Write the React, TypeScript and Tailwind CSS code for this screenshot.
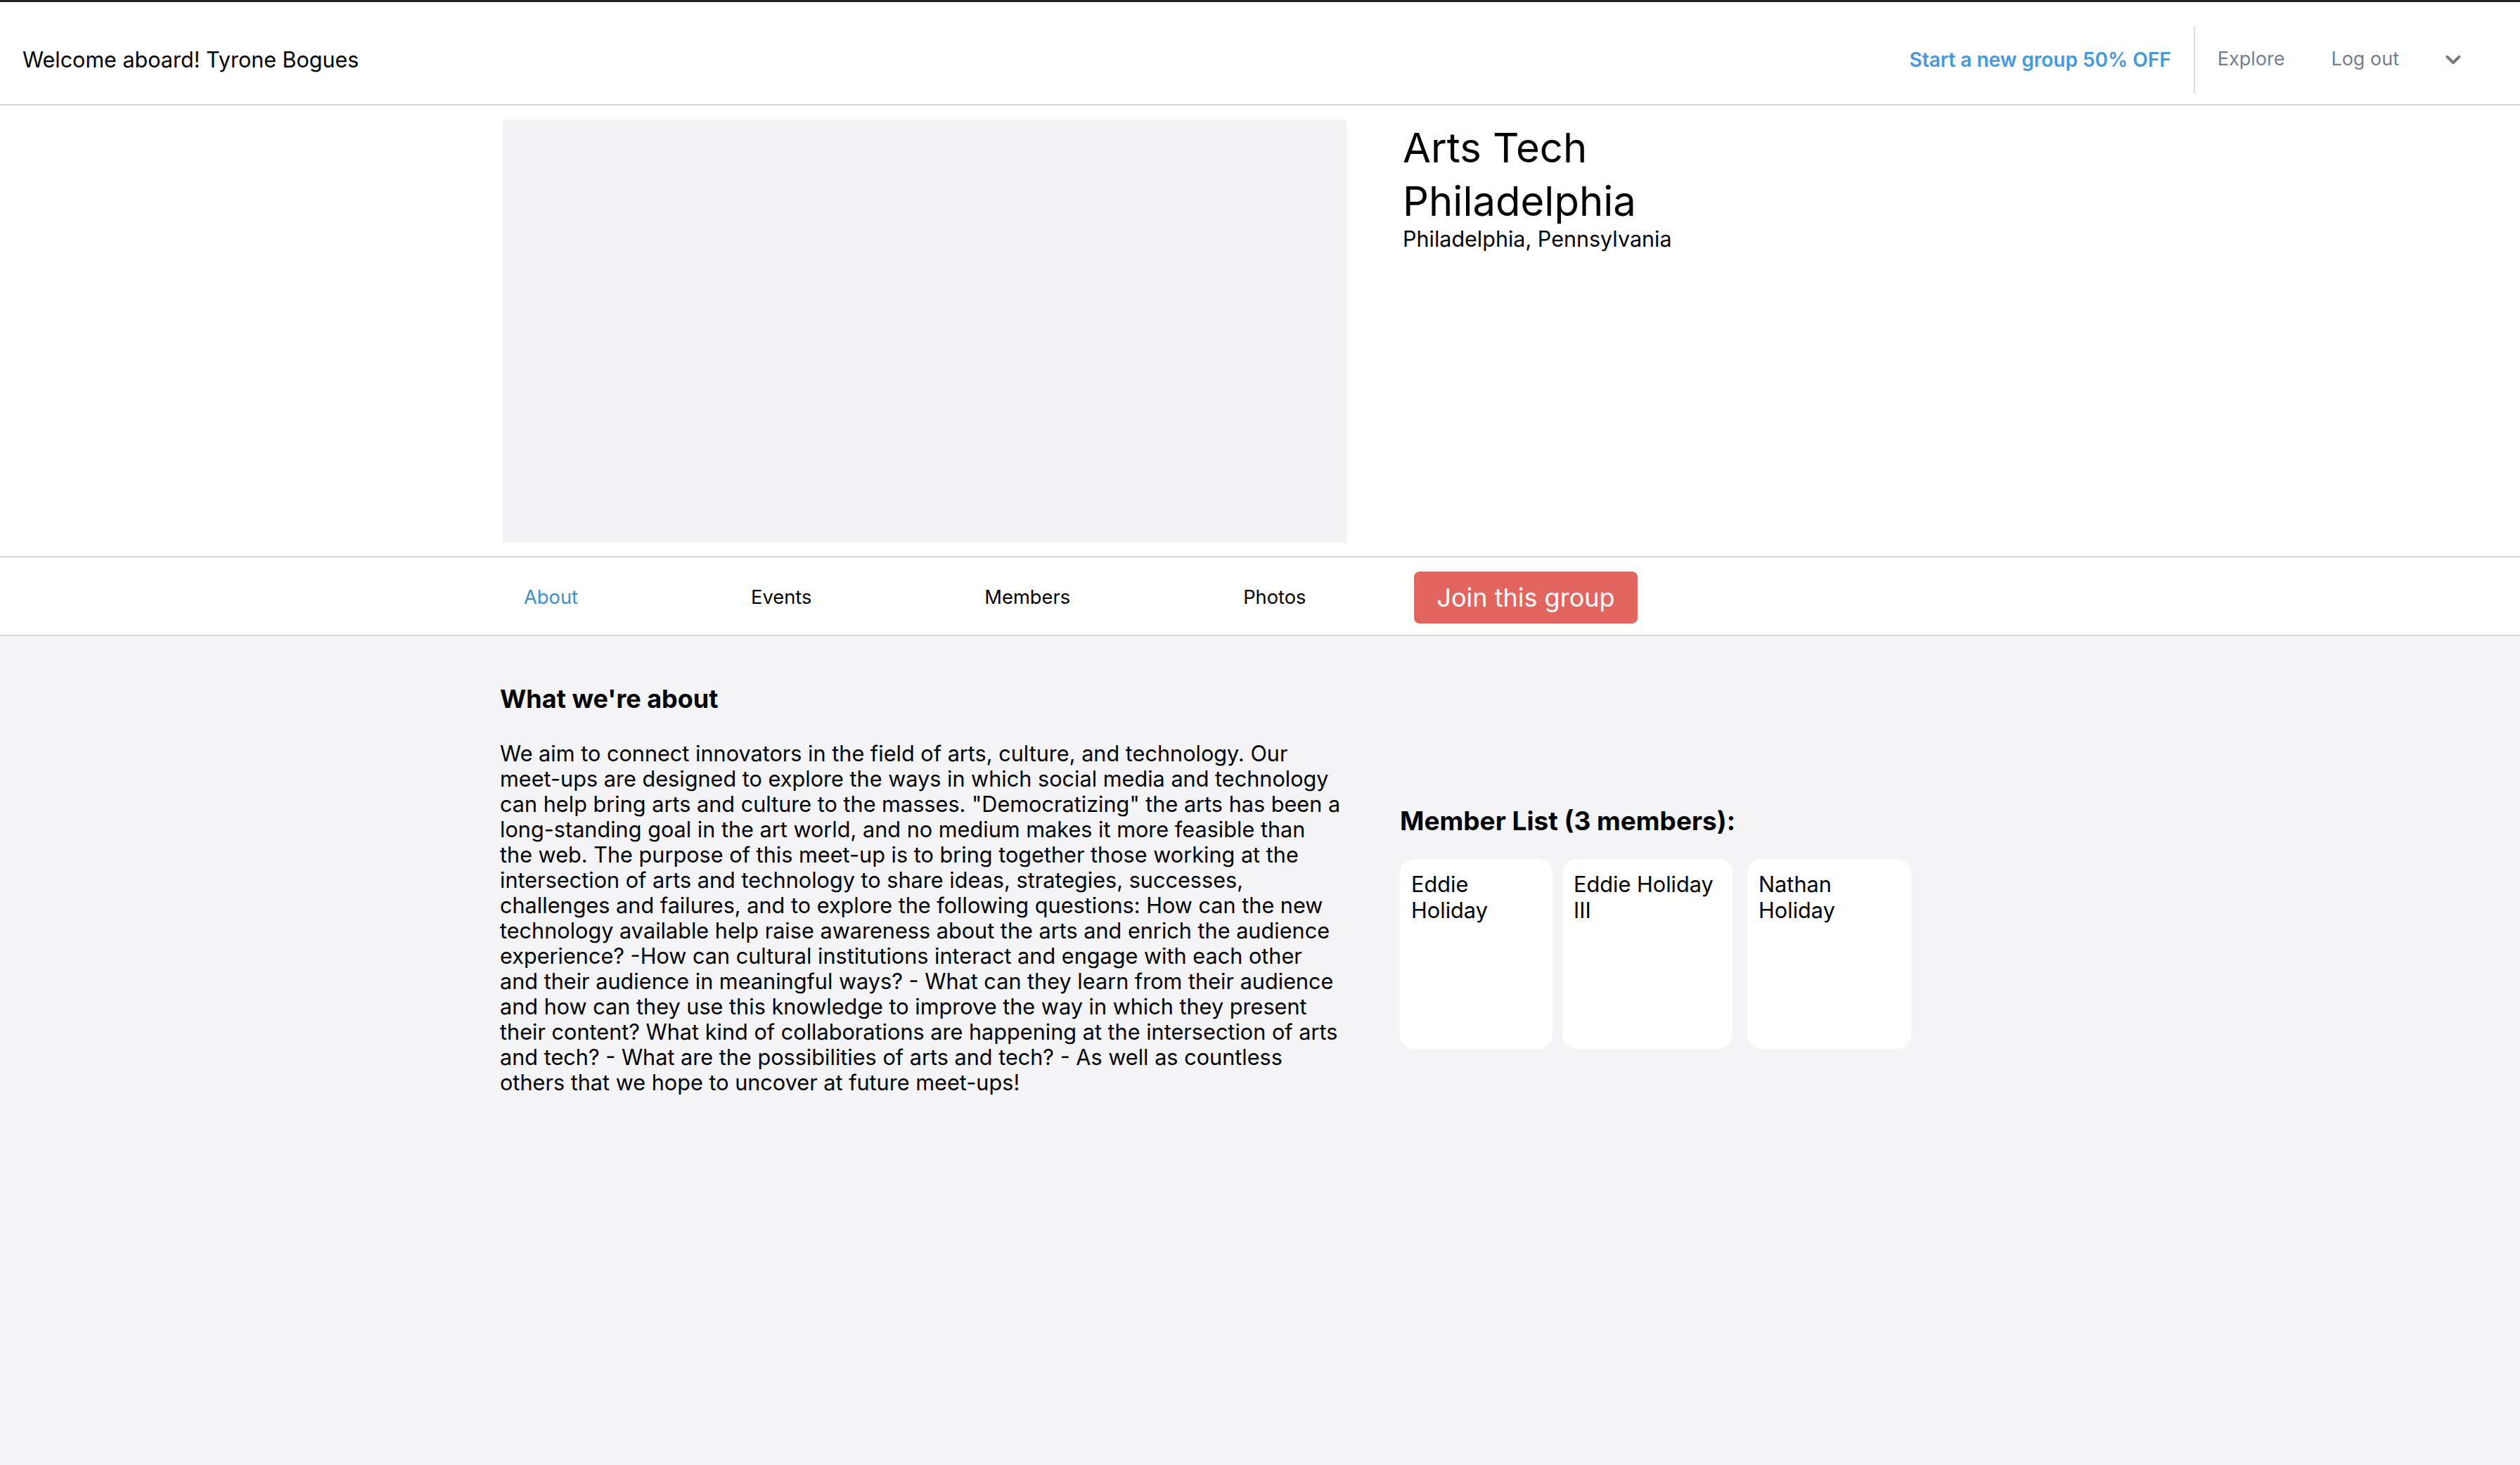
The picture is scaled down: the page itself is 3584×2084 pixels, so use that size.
import { ChevronDown } from 'lucide-react'

const tabs = ['About', 'Events', 'Members', 'Photos']

const members = [
  { id: 1, name: 'Eddie Holiday', className: 'w-[217px]' },
  { id: 2, name: 'Eddie Holiday III', className: 'ml-[14px] w-[242px]' },
  { id: 3, name: 'Nathan Holiday', className: 'ml-[21px] w-[233px]' },
]

const about =
  'We aim to connect innovators in the field of arts, culture, and technology. Our meet-ups are designed to explore the ways in which social media and technology can help bring arts and culture to the masses. "Democratizing" the arts has been a long-standing goal in the art world, and no medium makes it more feasible than the web. The purpose of this meet-up is to bring together those working at the intersection of arts and technology to share ideas, strategies, successes, challenges and failures, and to explore the following questions: How can the new technology available help raise awareness about the arts and enrich the audience experience? -How can cultural institutions interact and engage with each other and their audience in meaningful ways? - What can they learn from their audience and how can they use this knowledge to improve the way in which they present their content? What kind of collaborations are happening at the intersection of arts and tech? - What are the possibilities of arts and tech? - As well as countless others that we hope to uncover at future meet-ups!'

export default function App() {
  return (
    <div className="min-h-[2084px] bg-[#f4f4f6] font-['Inter',sans-serif] text-black">
      {/* top nav */}
      <header className="flex h-[150px] items-center justify-between border-t-[3px] border-b-2 border-t-[#222] border-b-[#d6d6d6] bg-white pt-[18px] pl-[32px] pr-[78px]">
        <div className="text-[30.5px]">Welcome aboard! Tyrone Bogues</div>
        <nav className="flex items-center">
          <a className="text-[28px] font-semibold text-[#4299e1]">Start a new group 50% OFF</a>
          <div className="mx-[32px] h-[96px] w-[2px] bg-[#dcdcdc]"></div>
          <a className="text-[27px] text-[#718096]">Explore</a>
          <a className="ml-[66px] text-[27px] text-[#718096]">Log out</a>
          <ChevronDown className="ml-[60px] h-[34px] w-[34px] text-[#777]" strokeWidth={2.75} />
        </nav>
      </header>

      {/* group hero */}
      <section className="flex bg-white pt-[20px] pb-[19px] pl-[715px]">
        <div className="h-[602px] w-[1200px] bg-[#f3f3f5]"></div>
        <div className="ml-[80px] w-[500px] pt-[2px]">
          <h1 className="text-[58px] leading-[76px]">Arts Tech Philadelphia</h1>
          <p className="text-[30.5px] leading-[32px]">Philadelphia, Pennsylvania</p>
        </div>
      </section>

      {/* tabs */}
      <div className="flex h-[114px] items-center border-y-2 border-[#d6d6d6] bg-white pt-[4px] pl-[715px]">
        <div className="flex w-[1200px] gap-[246px] pl-[30px] text-[27.3px]">
          {tabs.map((tab, i) => (
            <a key={tab} className={i === 0 ? 'text-[#3c8ecb]' : 'text-black'}>
              {tab}
            </a>
          ))}
        </div>
        <button className="ml-[96px] h-[74px] w-[318px] rounded-[8px] bg-[#e3655f] text-[36px] text-white">
          Join this group
        </button>
      </div>

      {/* about + members */}
      <div className="flex pl-[711px] pt-[63px]">
        <div className="w-[1196px]">
          <h2 className="text-[36px] font-bold leading-[52px]">What we're about</h2>
          <p className="mt-[34px] text-[30.65px] leading-[36px]">{about}</p>
        </div>
        <div className="ml-[84px] pt-[174px]">
          <h3 className="text-[37px] font-bold leading-[52px]">Member List (3 members):</h3>
          <div className="mt-[28px] flex">
            {members.map((m) => (
              <div key={m.id} className={`h-[270px] rounded-[20px] bg-white px-[16px] pt-[17px] pb-[15px] text-[30.7px] leading-[37px] ${m.className}`}>
                {m.name}
              </div>
            ))}
          </div>
        </div>
      </div>
    </div>
  )
}
